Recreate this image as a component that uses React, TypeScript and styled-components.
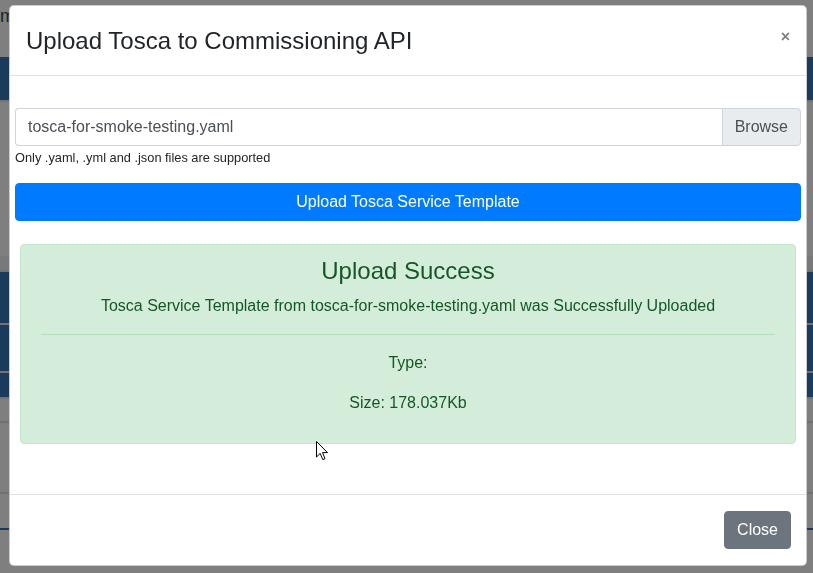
import styled, { createGlobalStyle } from "styled-components";

const GlobalStyle = createGlobalStyle`
  * {
    box-sizing: border-box;
  }

  html,
  body {
    margin: 0;
    padding: 0;
    width: 813px;
    height: 573px;
    overflow: hidden;
  }

  body {
    font-family: "Liberation Sans", Arial, sans-serif;
    font-size: 16px;
    line-height: 1.5;
    color: #212529;
    background: #fff;
  }
`;

// the page behind the modal, only its edges show through the backdrop
const Page = styled.div`
  display: flex;
  flex-direction: column;
  width: 813px;
  height: 573px;
`;

const PageTitle = styled.div`
  height: 57px;
  width: 9px;
  padding-top: 3px;
  font-size: 18px;
  color: #444;
  white-space: nowrap;
  overflow: hidden;
`;

const Band = styled.div<{ $h: number; $bg: string }>`
  height: ${(p) => p.$h}px;
  background: ${(p) => p.$bg};
  border-bottom: 2px solid #e3e6ea;
`;

const Gap = styled.div<{ $h: number }>`
  height: ${(p) => p.$h}px;
`;

const Rule = styled.div<{ $color?: string }>`
  height: 2px;
  background: ${(p) => p.$color || "#dee2e6"};
`;

const Backdrop = styled.div`
  position: fixed;
  inset: 0;
  background: rgba(0, 0, 0, 0.5);
  padding: 5px 0 0 9px;
`;

const Dialog = styled.div`
  width: 798px;
  background: #fff;
  border: 1px solid rgba(0, 0, 0, 0.2);
  border-radius: 5px;
  display: flex;
  flex-direction: column;
`;

const Header = styled.div`
  display: flex;
  align-items: flex-start;
  justify-content: space-between;
  padding: 17px 16px 16px;
  border-bottom: 1px solid #dee2e6;
`;

const Title = styled.h4`
  margin: 0;
  font-size: 24px;
  font-weight: 500;
  line-height: 36px;
  color: #212529;
`;

const CloseX = styled.button`
  border: 0;
  background: transparent;
  padding: 0;
  margin-top: 6px;
  font-family: "Liberation Sans", Arial, sans-serif;
  font-size: 16px;
  font-weight: 700;
  line-height: 16px;
  color: #000;
  opacity: 0.5;
  cursor: pointer;
`;

const Body = styled.div`
  padding: 32px 5px 50px;
`;

const InputGroup = styled.div`
  display: flex;
  height: 38px;
`;

const FileName = styled.div`
  flex: 1;
  border: 1px solid #ced4da;
  border-right: 0;
  border-radius: 4px 0 0 4px;
  padding: 6px 12px;
  color: #495057;
`;

const BrowseButton = styled.div`
  background: #e9ecef;
  border: 1px solid #ced4da;
  border-radius: 0 4px 4px 0;
  padding: 6px 12px;
  color: #495057;
`;

const HelpText = styled.small`
  display: block;
  margin-top: 2px;
  font-size: 12.8px;
  line-height: 19px;
  color: #212529;
`;

const PrimaryButton = styled.button`
  display: block;
  width: 100%;
  height: 38px;
  margin-top: 16px;
  border: 1px solid #007bff;
  border-radius: 4px;
  background: #007bff;
  color: #fff;
  font-family: "Liberation Sans", Arial, sans-serif;
  font-size: 16px;
  line-height: 24px;
`;

const Alert = styled.div`
  margin: 23px 5px 0;
  padding: 12px 20px;
  background: #d4edda;
  border: 1px solid #c3e6cb;
  border-radius: 4px;
  color: #155724;
  text-align: center;
`;

const AlertHeading = styled.h4`
  margin: 0 0 8px;
  font-size: 24px;
  font-weight: 500;
  line-height: 1.2;
`;

const AlertText = styled.p<{ $last?: boolean }>`
  margin: 0 0 ${(p) => (p.$last ? 16 : 0)}px;
`;

const Divider = styled.hr`
  margin: 16px 0;
  border: 0;
  border-top: 1px solid #b1dfbb;
`;

const Footer = styled.div`
  display: flex;
  justify-content: flex-end;
  padding: 16px 15px;
  border-top: 1px solid #dee2e6;
`;

const SecondaryButton = styled.button`
  height: 38px;
  padding: 6px 12px;
  border: 1px solid #6c757d;
  border-radius: 4px;
  background: #6c757d;
  color: #fff;
  font-family: "Liberation Sans", Arial, sans-serif;
  font-size: 16px;
  line-height: 24px;
`;

const Pointer = styled.svg`
  position: fixed;
  left: 316px;
  top: 441px;
`;

const App = () => {
  const fileName = "tosca-for-smoke-testing.yaml";

  return (
    <>
      <GlobalStyle />
      <Page>
        <PageTitle>m</PageTitle>
        <Band $h={45} $bg="#3676bb" />
        <Gap $h={154} />
        <Band $h={16} $bg="#f1f3f5" />
        <Band $h={53} $bg="#3676bb" />
        <Band $h={48} $bg="#3676bb" />
        <Band $h={26} $bg="#3676bb" />
        <Gap $h={22} />
        <Rule />
        <Gap $h={69} />
        <Rule />
        <Gap $h={34} />
        <Rule $color="#3676bb" />
      </Page>

      <Backdrop>
        <Dialog>
          <Header>
            <Title>Upload Tosca to Commissioning API</Title>
            <CloseX>×</CloseX>
          </Header>

          <Body>
            <InputGroup>
              <FileName>{fileName}</FileName>
              <BrowseButton>Browse</BrowseButton>
            </InputGroup>
            <HelpText>Only .yaml, .yml and .json files are supported</HelpText>
            <PrimaryButton>Upload Tosca Service Template</PrimaryButton>

            <Alert>
              <AlertHeading>Upload Success</AlertHeading>
              <AlertText>
                Tosca Service Template from {fileName} was Successfully Uploaded
              </AlertText>
              <Divider />
              <AlertText $last>Type:</AlertText>
              <AlertText $last>Size: 178.037Kb</AlertText>
            </Alert>
          </Body>

          <Footer>
            <SecondaryButton>Close</SecondaryButton>
          </Footer>
        </Dialog>
      </Backdrop>

      {/* mouse pointer caught in the screenshot */}
      <Pointer width="13" height="20" viewBox="0 0 13 20">
        <path
          d="M0.5 0.5 L0.5 16 L4.2 12.4 L6.8 18.6 L9 17.6 L6.5 11.6 L11.5 11.6 Z"
          fill="#fff"
          stroke="#000"
          strokeWidth="1"
          strokeLinejoin="round"
        />
      </Pointer>
    </>
  );
};

export default App;
